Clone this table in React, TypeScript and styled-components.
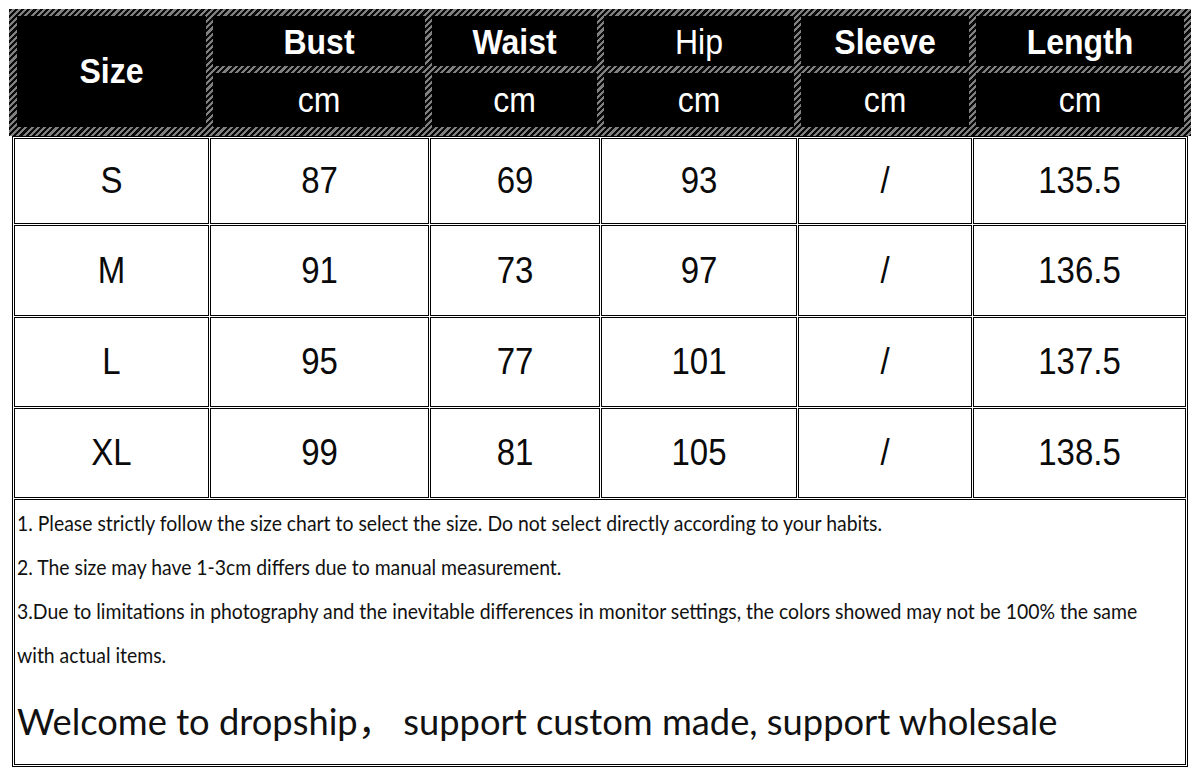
import React from "react";
import styled, { createGlobalStyle } from "styled-components";

const GlobalStyle = createGlobalStyle`
  html, body { margin: 0; padding: 0; background: #ffffff; }
  * { box-sizing: border-box; }
`;

const Page = styled.div`
  padding: 9px 0 0 9px;
  width: 1198px;
  height: 780px;
  overflow: hidden;
  background: #fff;
`;

const Header = styled.div`
  display: grid;
  grid-template-columns: 189px 212px 165px 190px 168px 208px;
  grid-template-rows: 50px 54px;
  gap: 7px;
  padding: 7px 7px 9px 8px;
  width: 1182px;
  background: repeating-linear-gradient(
    135deg,
    #0a0a0a 0 2.2px,
    #808080 2.2px 4.4px
  );
`;

const HeadCell = styled.div<{ $bold?: boolean; $span?: boolean }>`
  background: #000;
  color: #fff;
  display: flex;
  align-items: center;
  justify-content: center;
  font-family: "Liberation Sans", Arial, sans-serif;
  font-size: 32px;
  font-weight: ${(p) => (p.$bold ? 700 : 400)};
  grid-row: ${(p) => (p.$span ? "1 / 3" : "auto")};
  grid-column: ${(p) => (p.$span ? "1" : "auto")};
`;

const HeadText = styled.span<{ $lift?: number }>`
  display: inline-block;
  transform: translateY(${(p) => p.$lift ?? 0}px) scaleY(1.08);
`;

const Table = styled.div`
  margin-left: 3px;
  display: grid;
  grid-template-columns: 195px 219px 170px 196px 174px 213px;
  gap: 1px;
  padding: 1px;
  border: 1px solid #000;
  width: 1176px;
`;

const Cell = styled.div<{ $h: number }>`
  height: ${(p) => p.$h}px;
  border: 1px solid #000;
  display: flex;
  align-items: center;
  justify-content: center;
  font-family: "Liberation Sans", Arial, sans-serif;
  font-size: 33px;
  color: #0a0a0a;
`;

const CellText = styled.span`
  display: inline-block;
  transform: scaleY(1.1);
`;

const Notes = styled.div`
  grid-column: 1 / -1;
  height: 266px;
  border: 1px solid #000;
  padding: 2px 0 0 2px;
  font-family: Lato, "Noto Sans CJK SC", sans-serif;
  color: #111;
`;

const NoteLine = styled.div`
  font-size: 19.4px;
  line-height: 44px;
  height: 44px;
  white-space: nowrap;
  span {
    display: inline-block;
    transform: scaleY(1.04);
    transform-origin: left center;
  }
`;

const Welcome = styled.div`
  margin-top: 21px;
  font-size: 36.3px;
  line-height: 44px;
  white-space: nowrap;
`;

const heads = [
  { t: "Bust", b: true },
  { t: "Waist", b: true },
  { t: "Hip", b: false },
  { t: "Sleeve", b: true },
  { t: "Length", b: true },
];

const rows: { h: number; v: string[] }[] = [
  { h: 86, v: ["S", "87", "69", "93", "/", "135.5"] },
  { h: 91, v: ["M", "91", "73", "97", "/", "136.5"] },
  { h: 90, v: ["L", "95", "77", "101", "/", "137.5"] },
  { h: 90, v: ["XL", "99", "81", "105", "/", "138.5"] },
];

export default function App() {
  return (
    <>
      <GlobalStyle />
      <Page>
        <Header>
          <HeadCell $bold $span>
            <HeadText>Size</HeadText>
          </HeadCell>
          {heads.map((h) => (
            <HeadCell key={h.t} $bold={h.b}>
              <HeadText $lift={1}>{h.t}</HeadText>
            </HeadCell>
          ))}
          {heads.map((h) => (
            <HeadCell key={h.t + "cm"}>
              <HeadText>cm</HeadText>
            </HeadCell>
          ))}
        </Header>
        <Table>
          {rows.map((r) =>
            r.v.map((v, i) => (
              <Cell key={r.v[0] + i} $h={r.h}>
                <CellText>{v}</CellText>
              </Cell>
            ))
          )}
          <Notes>
            <NoteLine>
              <span>
                1. Please strictly follow the size chart to select the size. Do not select directly according to your habits.
              </span>
            </NoteLine>
            <NoteLine>
              <span>2. The size may have 1-3cm differs due to manual measurement.</span>
            </NoteLine>
            <NoteLine>
              <span>
                3.Due to limitations in photography and the inevitable differences in monitor settings, the colors showed may not be 100% the same
              </span>
            </NoteLine>
            <NoteLine>
              <span>with actual items.</span>
            </NoteLine>
            <Welcome>Welcome to dropship，&nbsp;support custom made, support wholesale</Welcome>
          </Notes>
        </Table>
      </Page>
    </>
  );
}
